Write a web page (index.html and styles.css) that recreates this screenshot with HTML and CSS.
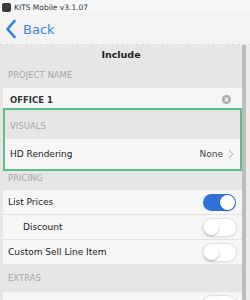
FILE: index.html
```html
<!DOCTYPE html>
<html lang="en">
<head>
  <meta charset="UTF-8" />
  <title>KITS Mobile</title>
  <link rel="stylesheet" href="styles.css">
</head>
<body>
  <div class="titlebar">
    <span class="app-icon"></span>
    <span class="app-name">KITS Mobile v3.1.07</span>
  </div>

  <div class="navbar">
    <svg class="back-chevron" width="12" height="20" viewBox="0 0 12 20">
      <path d="M9.5 2 L2.5 10 L9.5 18" fill="none" stroke="#2f7be0" stroke-width="2.6" stroke-linecap="round" stroke-linejoin="round"/>
    </svg>
    <span class="back-text">Back</span>
  </div>

  <div class="main">
    <div class="content">
      <div class="page-title">Include</div>

      <div class="section-head sh-project">PROJECT NAME</div>
      <div class="row row-input">
        <span class="row-label caps">OFFICE 1</span>
        <span class="clear-btn">
          <svg width="9" height="9" viewBox="0 0 9 9">
            <circle cx="4.5" cy="4.5" r="4.5" fill="#a9a9a9"/>
            <path d="M3 3 L6 6 M6 3 L3 6" stroke="#fff" stroke-width="1.1" stroke-linecap="round"/>
          </svg>
        </span>
      </div>

      <div class="highlight">
        <div class="section-head sh-visuals">VISUALS</div>
        <div class="row row-tall">
          <span class="row-label">HD Rendering</span>
          <span class="row-value">None</span>
          <svg class="chev" width="6" height="10" viewBox="0 0 6 10">
            <path d="M1 1 L5 5 L1 9" fill="none" stroke="#c4c4c4" stroke-width="1.2"/>
          </svg>
        </div>
      </div>

      <div class="section-head sh-pricing">PRICING</div>
      <div class="row">
        <span class="row-label">List Prices</span>
        <span class="toggle on"><span class="knob"></span></span>
      </div>
      <div class="row">
        <span class="row-label indent">Discount</span>
        <span class="toggle"><span class="knob"></span></span>
      </div>
      <div class="row">
        <span class="row-label">Custom Sell Line Item</span>
        <span class="toggle"><span class="knob"></span></span>
      </div>

      <div class="section-head sh-extras">EXTRAS</div>
      <div class="row">
        <span class="row-label"></span>
        <span class="toggle"><span class="knob"></span></span>
      </div>
    </div>
    <div class="scrollbar"></div>
  </div>
</body>
</html>
```

FILE: styles.css
```css
* { margin: 0; padding: 0; box-sizing: border-box; }
body {
  font-family: "DejaVu Sans", Verdana, sans-serif;
  background: #e6e6e6;
  width: 250px;
  height: 300px;
  overflow: hidden;
}
.titlebar {
  height: 14px;
  background: #f5f6f8;
  display: flex;
  align-items: center;
  padding-left: 2px;
  gap: 3px;
}
.app-icon {
  width: 9px;
  height: 9px;
  border-radius: 2px;
  background: #3a3a3a;
}
.app-name {
  font-size: 7.5px;
  color: #333;
}
.navbar {
  height: 31px;
  background: #f3f3f3;
  border-bottom: 1px dashed #dadada;
  display: flex;
  align-items: center;
  padding-left: 5px;
  gap: 6px;
}
.back-text {
  color: #3a86e0;
  font-size: 13px;
}
.main {
  display: flex;
  height: 255px;
  overflow: hidden;
}
.content {
  width: 242px;
  background: #e6e6e6;
  overflow: hidden;
}
.scrollbar {
  background: #bdbdbd;
  border-right: 4px solid #ececec;
  flex: 0 0 8px;
}
.page-title {
  height: 18px;
  line-height: 20px;
  text-align: center;
  font-weight: bold;
  font-size: 9.5px;
  color: #222;
}
.section-head {
  font-size: 8.5px;
  color: #a8a8a8;
  padding-left: 8px;
}
.sh-project { height: 25px; padding-top: 7px; }
.sh-visuals { height: 29px; padding-top: 11px; padding-left: 5px; }
.sh-pricing { height: 19px; padding-top: 2px; }
.sh-extras { height: 27px; padding-top: 8px; }
.row {
  height: 25px;
  margin-left: 3px;
  background: #f6f6f6;
  border-bottom: 1px solid #e2e2e2;
  display: flex;
  align-items: center;
  padding: 0 5px;
  font-size: 9px;
  color: #222;
}
.row-input {
  height: 21px;
  align-items: flex-end;
  padding-bottom: 3px;
  padding-left: 7px;
}
.row-tall {
  height: 30px;
  margin-left: 0;
  padding-left: 5px;
  padding-right: 6px;
  border-bottom: none;
}
.row-label { flex: 1; }
.caps { font-weight: bold; font-size: 8.5px; color: #333; }
.indent { padding-left: 15px; }
.row-value { color: #444; margin-right: 5px; }
.clear-btn { display: flex; margin-right: 6px; margin-bottom: 1px; }
.highlight {
  border: 2px solid #5cbf88;
  margin-left: 3px;
  height: 63px;
  margin-top: -1px;
}
.toggle {
  width: 33px;
  height: 17px;
  border-radius: 9px;
  background: #fff;
  box-shadow: 0 0 0 1px #e0e0e0, 0 1px 2px rgba(0,0,0,0.15);
  position: relative;
  margin-right: 1px;
}
.toggle .knob {
  position: absolute;
  top: 1px;
  left: 1px;
  width: 15px;
  height: 15px;
  border-radius: 50%;
  background: #fff;
  box-shadow: 0 1px 2px rgba(0,0,0,0.3);
}
.toggle.on {
  background: #2f72d6;
  box-shadow: none;
}
.toggle.on .knob {
  left: 17px;
}
```
